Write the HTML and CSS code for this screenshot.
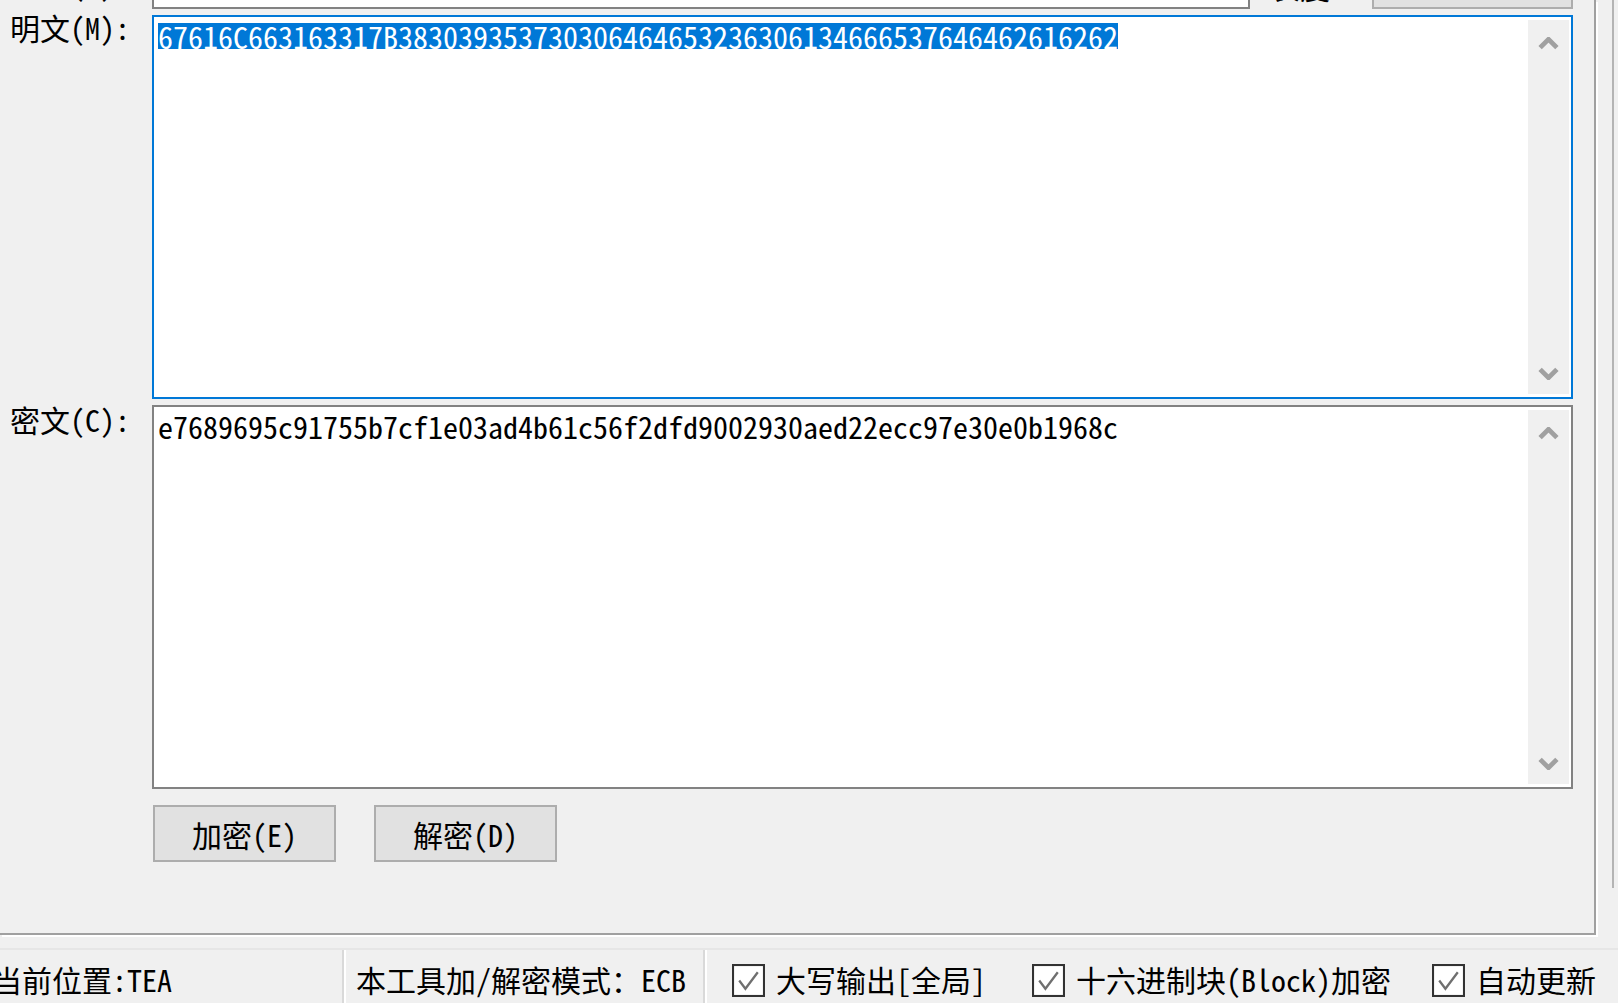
FILE: index.html
```html
<!DOCTYPE html>
<html lang="zh-CN">
<head>
    <meta charset="UTF-8">
    <title>TEA 加/解密</title>
    <link rel="stylesheet" href="styles.css">
</head>
<body>

<div class="window">

    <!-- 主面板：上方被裁掉一半的密钥行，然后是明文 / 密文两个文本框 -->
    <div class="panel">
        <div class="row-top">
            <span class="label">密钥(K):</span>
            <div class="key-line">
                <div class="input"></div>
                <span class="mid-label">长度</span>
                <div class="btn-top"></div>
            </div>
        </div>

        <span class="label">明文(M):</span>
        <div class="box focused">
            <div class="box-text"><span class="sel">67616C663163317B383039353730306464653236306134666537646462616262</span></div>
            <div class="scroll">
                <svg class="arrow" viewBox="0 0 20 12"><polyline points="2,10 10,2 18,10"/></svg>
                <svg class="arrow" viewBox="0 0 20 12"><polyline points="2,2 10,10 18,2"/></svg>
            </div>
        </div>

        <span class="label label-c">密文(C):</span>
        <div class="box">
            <div class="box-text">e7689695c91755b7cf1e03ad4b61c56f2dfd9002930aed22ecc97e30e0b1968c</div>
            <div class="scroll">
                <svg class="arrow" viewBox="0 0 20 12"><polyline points="2,10 10,2 18,10"/></svg>
                <svg class="arrow" viewBox="0 0 20 12"><polyline points="2,2 10,10 18,2"/></svg>
            </div>
        </div>

        <span></span>
        <div class="buttons">
            <button class="btn">加密(E)</button>
            <button class="btn">解密(D)</button>
        </div>
    </div>

    <!-- 状态栏 -->
    <div class="statusbar">
        <div class="pane pane-pos">当前位置:TEA</div>
        <div class="pane pane-mode">本工具加/解密模式：ECB</div>
        <div class="pane pane-opts">
            <span class="check">
                <svg class="tick" viewBox="0 0 32 32"><rect x="1" y="1" width="30" height="30"/><polyline points="7,16 13,24 25,8"/></svg>
                大写输出[全局]
            </span>
            <span class="check">
                <svg class="tick" viewBox="0 0 32 32"><rect x="1" y="1" width="30" height="30"/><polyline points="7,16 13,24 25,8"/></svg>
                十六进制块(Block)加密
            </span>
            <span class="check check-last">
                <svg class="tick" viewBox="0 0 32 32"><rect x="1" y="1" width="30" height="30"/><polyline points="7,16 13,24 25,8"/></svg>
                自动更新
            </span>
        </div>
    </div>

    <div class="edge"></div>
</div>

</body>
</html>
```

FILE: styles.css
```css
html, body{  margin: 0;  padding: 0;  }
body{
    background: #f0f0f0;
    color: #000;
    font-family: "Noto Sans Mono CJK SC", "Noto Sans CJK SC", "Liberation Mono", monospace;
    font-size: 30px;
}

.window{
    position: relative;
    width: 1618px;
    height: 1003px;
    overflow: hidden;
}

/* 主面板 */
.panel{
    display: grid;
    grid-template-columns: 152px 1421px;
    row-gap: 6px;
    align-content: start;
    width: 1596px;
    height: 935px;
    box-sizing: border-box;
    border-right: 2px solid #a0a0a0;
    border-bottom: 2px solid #a0a0a0;
    box-shadow: 2px 2px 0 #fff;
}

.label{
    padding-left: 10px;
    line-height: 24px;
    white-space: nowrap;
}
.label-c{
    padding-top: 2px;
}

.row-top{
    display: contents;
}
.row-top .label{
    margin-top: -29px;
}
.key-line{
    display: flex;
    align-items: flex-start;
    height: 36px;
    margin-top: -27px;
}
.input{
    width: 1098px;
    height: 36px;
    box-sizing: border-box;
    background: #fff;
    border: 2px solid #828282;
}
.mid-label{
    margin-left: 20px;
    line-height: 24px;
    margin-top: 1px;
}
.key-line .btn-top{
    margin-left: auto;
    width: 201px;
    height: 36px;
    box-sizing: border-box;
    background: #e1e1e1;
    border: 2px solid #adadad;
}

/* 文本框 */
.box{
    display: flex;
    height: 384px;
    box-sizing: border-box;
    background: #fff;
    border: 2px solid #828282;
    padding: 3px 2px 3px 0;
}
.box.focused{
    border-color: #0078d7;
}
.box-text{
    flex: 1;
    padding: 3px 0 0 4px;
    line-height: 26px;
    white-space: nowrap;
}
.sel{
    display: inline-block;
    background: #0078d7;
    color: #fff;
    height: 26px;
}
.scroll{
    width: 41px;
    background: #f0f0f0;
    display: flex;
    flex-direction: column;
    justify-content: space-between;
    align-items: center;
    padding: 17px 0 14px;
}
.arrow{
    width: 21px;
    height: 13px;
}
.arrow polyline{
    fill: none;
    stroke: #a0a0a0;
    stroke-width: 4.5;
}

/* 按钮 */
.buttons{
    display: flex;
    gap: 38px;
    margin-top: 10px;
    padding-left: 1px;
}
.btn{
    width: 183px;
    height: 57px;
    box-sizing: border-box;
    background: #e1e1e1;
    border: 2px solid #adadad;
    font: inherit;
    color: #000;
    padding: 0;
    line-height: 44px;
}

/* 状态栏 */
.statusbar{
    display: flex;
    align-items: stretch;
    height: 55px;
    margin-top: 13px;
    border-top: 2px solid #e6e6e6;
}
.pane{
    display: flex;
    align-items: center;
    white-space: nowrap;
    border-right: 2px solid #d9d9d9;
    box-shadow: 2px 0 0 #fff;
    padding-top: 2px;
}
.pane-pos{
    width: 352px;
    margin-left: -8px;
    box-sizing: border-box;
}
.pane-mode{
    width: 361px;
    box-sizing: border-box;
    padding-left: 12px;
}
.pane-opts{
    border-right: none;
    box-shadow: none;
    padding-left: 27px;
    gap: 46px;
}
.check{
    display: flex;
    align-items: center;
    gap: 11px;
}
.check-last{
    margin-left: -5px;
}
.tick{
    width: 33px;
    height: 33px;
    margin-top: 4px;
}
.tick rect{
    fill: #fff;
    stroke: #333;
    stroke-width: 2;
}
.tick polyline{
    fill: none;
    stroke: #6f6f6f;
    stroke-width: 2.2;
}

/* 右侧窗口边线 */
.edge{
    position: absolute;
    top: 0;
    left: 1612px;
    width: 2px;
    height: 888px;
    background: #b4b4b4;
}
```
